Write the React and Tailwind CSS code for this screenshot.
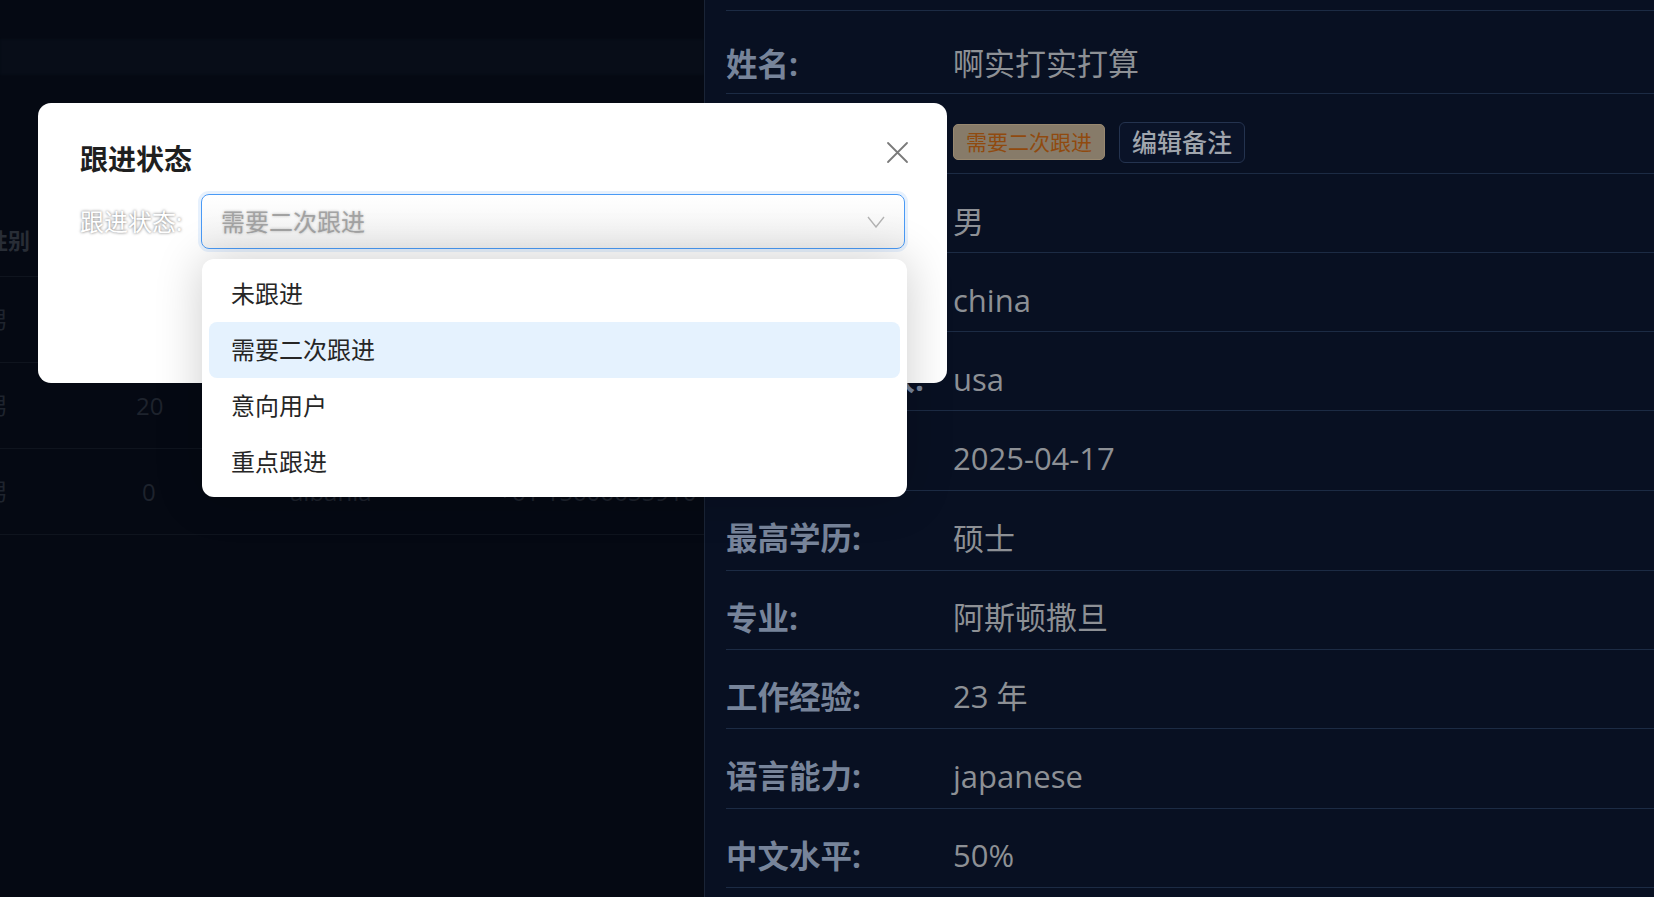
import React from "react";

const FONT = { fontFamily: '"Open Sans", "Noto Sans CJK SC", sans-serif' };

const rows = [
  { h: "h-[83px] pt-[23px]", label: "姓名:", value: "啊实打实打算" },
  { h: "h-[80px] pt-[17px]", label: "跟进状态:", tags: true },
  { h: "h-[79px] pt-[16px]", label: "性别:", value: "男" },
  { h: "h-[79px] pt-[16px]", label: "国籍:", value: "china" },
  { h: "h-[79px] pt-[16px]", label: "目前居住国家:", value: "usa" },
  { h: "h-[80px] pt-[16px]", label: "出生日期:", value: "2025-04-17" },
  { h: "h-[80px] pt-[15px]", label: "最高学历:", value: "硕士" },
  { h: "h-[79px] pt-[15px]", label: "专业:", value: "阿斯顿撒旦" },
  { h: "h-[79px] pt-[15px]", label: "工作经验:", value: "23 年" },
  { h: "h-[80px] pt-[15px]", label: "语言能力:", value: "japanese" },
  { h: "h-[79px] pt-[15px]", label: "中文水平:", value: "50%" },
];

const options = ["未跟进", "需要二次跟进", "意向用户", "重点跟进"];

function LeftPanel() {
  return (
    <div className="w-[704px] shrink-0 h-full bg-[#050913] flex flex-col overflow-hidden">
      <div className="mt-[39px] h-[36px] bg-[#080d18] blur-[1px]" />
      <div className="mt-[130px] flex flex-col">
        <div className="h-[72px] border-b border-[#0f141e] flex items-center -ml-[14px]">
          <span className="text-[22px] font-bold text-[#282d36]">性别</span>
        </div>
        <div className="h-[86px] border-b border-[#0f141e] flex items-center -ml-[15px]">
          <span className="text-[23px] text-[#1f242e]">男</span>
        </div>
        <div className="h-[86px] border-b border-[#0f141e] flex items-center -ml-[15px]">
          <span className="w-[151px] text-[23px] text-[#1f242e]">男</span>
          <span className="text-[24px] text-[#1e232d]">20</span>
        </div>
        <div className="h-[86px] border-b border-[#0f141e] flex items-center -ml-[15px]">
          <span className="w-[157px] text-[23px] text-[#1f242e]">男</span>
          <span className="w-[148px] text-[24px] text-[#1e232d]">0</span>
          <span className="w-[208px] text-[24px] text-[#1e232d]">albania</span>
          <span className="text-[24px] text-[#1e232d]">+61 15606655910</span>
        </div>
      </div>
    </div>
  );
}

function RightPanel() {
  return (
    <div className="flex-1 h-full bg-[#081022] border-l border-[#1a2436] pl-[21px] pt-[10px] overflow-hidden">
      <div className="border-t border-[#1c2b44]">
        {rows.map((r, i) => (
          <div
            key={i}
            className={`${r.h} border-b border-[#1c2b44] flex items-center whitespace-nowrap`}
          >
            <div className="w-[227px] shrink-0 text-[31.5px] font-bold text-[#77849a] leading-none">
              {r.label}
            </div>
            {r.tags ? (
              <div className="flex items-center gap-[14px]">
                <span className="h-[36px] px-[12px] flex items-center rounded-[5px] bg-[#877b69] border border-[#988870] text-[21px] text-[#904a0f] leading-none">
                  需要二次跟进
                </span>
                <span className="h-[41px] px-[12px] flex items-center rounded-[6px] bg-[#0a1328] border border-[#24334f] text-[25px] font-medium text-[#a0a5ad] leading-none">
                  编辑备注
                </span>
              </div>
            ) : (
              <div className="text-[31px] text-[#8d9095] leading-none">{r.value}</div>
            )}
          </div>
        ))}
      </div>
    </div>
  );
}

function Modal() {
  return (
    <div className="absolute left-[38px] top-[103px] w-[909px] h-[280px] rounded-[13px] bg-white px-[42px]">
      <div className="flex items-start justify-between">
        <div className="mt-[40px] h-[32px] leading-[32px] text-[28px] font-bold text-[#1f1f1f]">
          跟进状态
        </div>
        <svg
          className="mt-[38px] -mr-[4px]"
          width="23"
          height="23"
          viewBox="0 0 23 23"
          fill="none"
          stroke="#7a7a7a"
          strokeWidth="1.8"
          strokeLinecap="round"
        >
          <path d="M2 2 L21 21 M21 2 L2 21" />
        </svg>
      </div>
      <div className="mt-[19px] flex items-center">
        <div className="w-[121px] shrink-0 text-[24px] text-white [text-shadow:0_0_3px_rgba(0,0,0,0.6)] leading-none">
          跟进状态:
        </div>
        <div className="w-[704px] h-[55px] rounded-[8px] border border-[#4a9af5] shadow-[0_0_0_3px_#e7f1fd] bg-linear-to-b from-white to-[#f1f1f1] flex items-center justify-between pl-[19px] pr-[19px]">
          <span className="text-[24px] text-[#a3a3a3] [text-shadow:0_0_3px_rgba(0,0,0,0.25)] leading-none">
            需要二次跟进
          </span>
          <svg width="18" height="12" viewBox="0 0 18 12" fill="none" stroke="#b3b3b3" strokeWidth="1.4">
            <path d="M1 1 L9 11 L17 1" />
          </svg>
        </div>
      </div>
    </div>
  );
}

function Dropdown() {
  return (
    <div className="absolute left-[202px] top-[259px] w-[705px] h-[238px] rounded-[12px] bg-white p-[7px] shadow-[0_0_48px_rgba(0,0,0,0.2)]">
      {options.map((o, i) => (
        <div
          key={o}
          className={`h-[56px] rounded-[8px] pl-[22px] flex items-center text-[24px] text-[#262626] leading-none ${
            i === 1 ? "bg-[#e5f2fe]" : ""
          }`}
        >
          {o}
        </div>
      ))}
    </div>
  );
}

export default function App() {
  return (
    <div className="relative w-[1654px] h-[897px] flex overflow-hidden" style={FONT}>
      <LeftPanel />
      <RightPanel />
      <Modal />
      <Dropdown />
    </div>
  );
}
